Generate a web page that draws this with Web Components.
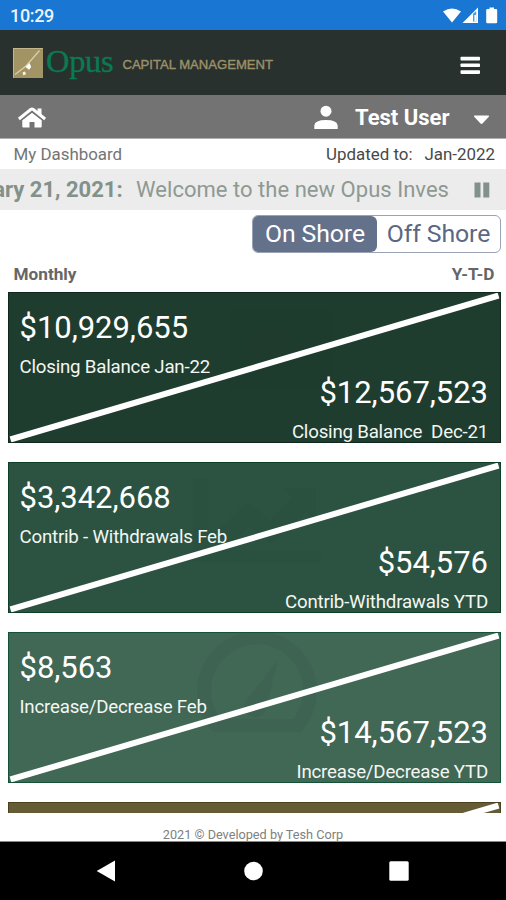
<!DOCTYPE html>
<html lang="en">
<head>
<meta charset="UTF-8" />
<title>Opus Capital Management</title>
<style>
  body { margin:0; background:#fff; font-family:Roboto, "Liberation Sans", sans-serif; }
</style>
</head>
<body>
<opus-app></opus-app>

<script>
/**
 * Android status bar with the clock and system icons.
 */
class StatusBar extends HTMLElement {
  constructor() {
    super();
    this.attachShadow({ mode: "open" });
  }

  connectedCallback() {
    this.shadowRoot.innerHTML = `
      <style>
        :host { display:flex; height:30px; box-sizing:border-box; padding:1px 7px 0 10px; align-items:center; justify-content:space-between; background:#1976d2; color:#eaf4ff; font-size:18px; font-weight:500; letter-spacing:-0.35px; }
        svg { display:block; }
      </style>
      <span><slot></slot></span>
      <svg width="57" height="18" viewBox="0 0 57 18" fill="#fff">
        <path d="M1 4.6Q10 -1.8 19 4.6L10 15.4Z" />
        <path d="M20.5 16L36 .5V16Z" />
        <path d="M31 6.8L34.2 4V14.6H31Z" fill="#1976d2" opacity=".75" />
        <path d="M32.4 8H34V14.6H32.4Z" />
        <path d="M47.5 .5h4.500V2h2q1.200 0 1.200 1.200V15q0 1.200-1.200 1.200h-8.600q-1.200 0-1.200-1.200V3.200Q44.200 2 45.400 2H47.500Z" />
      </svg>
    `;
  }
}

/**
 * Dark brand header with the logo and the menu button.
 */
class BrandHeader extends HTMLElement {
  constructor() {
    super();
    this.attachShadow({ mode: "open" });
  }

  connectedCallback() {
    this.shadowRoot.innerHTML = `
      <style>
        :host { display:flex; height:65px; box-sizing:border-box; padding:0 25px 0 13px; align-items:center; background:#29312e; }
        svg { display:block; }
        .name { margin:-4px 0 0 3px; color:#0b7a53; font:32.5px/40px "Liberation Serif", serif; letter-spacing:-0.3px; -webkit-text-stroke:0.3px #0b7a53; }
        .tagline { margin:4px 0 0 9px; color:#9c9068; font:13.1px/20px "Liberation Sans", sans-serif; -webkit-text-stroke:0.4px #9c9068; }
        .menu { margin:5px 0 0 auto; }
      </style>
      <svg width="30" height="30" viewBox="0 0 30 30">
        <rect width="30" height="30" fill="#a39466" />
        <path d="M0 .5H30M.5 0V30" stroke="#c3b88d" />
        <path d="M2 26.5L13 18L26.5 2.5" fill="none" stroke="#d9cfa6" stroke-width="1.3" />
        <path d="M16.5 15L18.2 19L16 21.8L12.5 19Z" fill="#fff" />
        <path d="M9.5 24.5L12 23.5L13 26L10.5 27.5Z" fill="#fff6d8" />
      </svg>
      <span class="name">Opus</span>
      <span class="tagline">CAPITAL MANAGEMENT</span>
      <svg class="menu" width="21" height="19" viewBox="0 0 21 19" fill="#fff">
        <rect x=".5" y=".8" width="19.5" height="3.7" rx=".8" />
        <rect x=".5" y="7.4" width="19.5" height="3.7" rx=".8" />
        <rect x=".5" y="14.2" width="19.5" height="3.7" rx=".8" />
      </svg>
    `;
  }
}

/**
 * Grey bar with the home link and the signed-in user.
 */
class UserBar extends HTMLElement {
  constructor() {
    super();
    this.attachShadow({ mode: "open" });
  }

  connectedCallback() {
    this.shadowRoot.innerHTML = `
      <style>
        :host { display:flex; height:44px; box-sizing:border-box; padding:1px 16px 0 17px; align-items:center; background:#737373; border-bottom:1px solid #b0b0b0; color:#fff; font-size:22px; font-weight:700; }
        svg { display:block; }
        .person { margin-left:auto; }
        .user { margin:1px 23.5px 0 17px; }
        .caret { margin-top:5px; }
      </style>
      <svg width="30" height="24" viewBox="0 0 30 24" fill="#fff">
        <path d="M5.3 15.2L15 7.8L24.7 15.2V21.5q0 1-1 1H17.5V17h-5V22.5H6.3q-1 0-1-1Z" />
        <path d="M20.5 3.5h4V10l-4-3Z" />
        <path d="M1.9 14L14 4.3q1-.7 2 0L28.100 14" fill="none" stroke="#fff" stroke-width="3" />
        <path d="M4.8 14.9L15 6.7L25.2 14.9" fill="none" stroke="#737373" />
      </svg>
      <svg class="person" width="24" height="25" viewBox="0 0 24 25" fill="#fff">
        <circle cx="12" cy="6.200" r="5.500" />
        <path d="M.3 24V20.5Q.8 15 12 15T23.7 20.5V24Z" />
      </svg>
      <span class="user"><slot></slot></span>
      <svg class="caret" width="17" height="10" viewBox="0 0 17 10" fill="#fff">
        <path d="M1.5 .5h14q1 .3.3 1.3L9.5 8.5q-1 .8-2 0L1.2 1.8Q.5.8 1.5.5Z" />
      </svg>
    `;
  }
}

/**
 * Announcement ticker with a pause button.
 */
class NewsTicker extends HTMLElement {
  constructor() {
    super();
    this.attachShadow({ mode: "open" });
  }

  connectedCallback() {
    this.shadowRoot.innerHTML = `
      <style>
        :host { display:flex; height:41px; align-items:center; padding-right:16px; background:#ebeceb; color:#8e9993; font-size:22px; }
        .window { display:flex; justify-content:flex-end; width:449px; overflow:hidden; white-space:pre; }
        .date { margin-right:13.5px; color:#82918a; font-weight:700; }
        .text { letter-spacing:0.03px; }
        .pause { display:block; margin-left:auto; }
      </style>
      <div class="window">
        <span class="date"><slot name="date"></slot></span>
        <span class="text"><slot></slot></span>
      </div>
      <svg class="pause" width="16" height="16" viewBox="0 0 16 16" fill="#82918a">
        <rect x=".5" y=".5" width="6" height="15" />
        <rect x="9.3" y=".5" width="6" height="15" />
      </svg>
    `;
  }
}

/**
 * Two-way switch between the on shore and off shore funds.
 */
class ShoreToggle extends HTMLElement {
  constructor() {
    super();
    this.attachShadow({ mode: "open" });
  }

  connectedCallback() {
    this.shadowRoot.innerHTML = `
      <style>
        :host { display:flex; width:249px; height:38px; box-sizing:border-box; border:1px solid #9aa3b3; border-radius:6px; background:#fff; font-size:24.8px; line-height:36px; letter-spacing:-0.1px; overflow:hidden; }
        span { flex:1; text-align:center; color:#5b6884; white-space:nowrap; }
        .on { flex:none; width:124px; background:#64718b; color:#fff; border-radius:0 6px 6px 0; }
      </style>
      <span class="on">On Shore</span>
      <span class="off">Off Shore</span>
    `;
  }
}

/**
 * Balance card split by a diagonal: monthly figure above, year-to-date below.
 * Attributes: color, edge, icon, monthly, monthly-label, ytd, ytd-label.
 */
class BalanceCard extends HTMLElement {
  constructor() {
    super();
    this.attachShadow({ mode: "open" });
  }

  /**
   * Faint picture behind the figures.
   * @returns {string}
   */
  watermark() {
    const icons = {
      money: `<path d="M222 18H324V98H222Z" opacity=".4" /><circle cx="262" cy="54" r="20" opacity=".4" />`,
      chart: `<path d="M185 16h16v72h112v13H185ZM208 70l32-30 22 18 22-22-10-10h34v34l-10-10-34 32-22-18-20 20Z" opacity=".7" />`,
      gauge: `<path fill-rule="evenodd" d="M205 100A60 60 0 1 1 293 100ZM213 87H285A46 46 0 1 0 213 87ZM240 66L270 28L258 76A11 11 0 1 1 240 66Z" />`
    };
    return icons[this.getAttribute("icon")] || "";
  }

  /**
   * One figure with its caption.
   * @param {string} name attribute holding the amount
   * @returns {string}
   */
  figure(name) {
    const amount = this.getAttribute(name);
    if (!amount) return "";
    return `
      <div class="${name}">
        <div class="amount">${amount}</div>
        <div class="label">${this.getAttribute(name + "-label")}</div>
      </div>
    `;
  }

  connectedCallback() {
    this.shadowRoot.innerHTML = `
      <style>
        :host { display:grid; flex:none; height:150.5px; box-sizing:border-box; border:1px solid ${this.getAttribute("edge")}; background:${this.getAttribute("color")}; color:#fff; overflow:hidden; }
        svg, .figures { grid-area:1 / 1; }
        svg { display:block; margin:-1px; }
        .figures { display:flex; flex-direction:column; padding:16px 12px 0 11px; }
        .amount { font-size:31px; line-height:38px; letter-spacing:-0.04px; }
        .label { margin-top:8px; font-size:18.7px; line-height:24px; letter-spacing:-0.21px; color:#f3f6f3; white-space:pre; }
        .ytd { align-self:flex-end; text-align:right; margin-top:-5px; }
      </style>
      <svg width="493.5" height="150.5" viewBox="0 0 493.5 150.5">
        <g fill="#000" opacity=".035">${this.watermark()}</g>
        <path d="M2.5 147.5L490.5 3.5" stroke="#fff" stroke-width="6" />
      </svg>
      <div class="figures">
        ${this.figure("monthly")}
        ${this.figure("ytd")}
      </div>
    `;
  }
}

/**
 * Android navigation bar.
 */
class NavBar extends HTMLElement {
  constructor() {
    super();
    this.attachShadow({ mode: "open" });
  }

  connectedCallback() {
    this.shadowRoot.innerHTML = `
      <style>
        :host { display:flex; height:58px; box-sizing:border-box; padding:0 97px 0 96px; align-items:center; justify-content:space-between; background:#000; }
        svg { display:block; }
      </style>
      <svg width="20" height="22" viewBox="0 0 20 22" fill="#fff"><path d="M.7 11L19 .5V21.5Z" /></svg>
      <svg width="20" height="20" viewBox="0 0 20 20" fill="#fff"><circle cx="10.5" cy="10" r="9.3" /></svg>
      <svg width="20" height="20" viewBox="0 0 20 20" fill="#fff"><rect x=".3" y=".3" width="19.4" height="19.4" rx="1.5" /></svg>
    `;
  }
}

/**
 * Dashboard page.
 */
class OpusApp extends HTMLElement {
  constructor() {
    super();
    this.attachShadow({ mode: "open" });
  }

  connectedCallback() {
    this.shadowRoot.innerHTML = `
      <style>
        :host { display:flex; flex-direction:column; height:900px; width:506px; overflow:hidden; }
        .crumbs { display:flex; height:30px; padding:0 11px 0 13.5px; box-sizing:border-box; align-items:center; font-size:16.9px; color:#484848; }
        .page { margin-right:auto; color:#747474; }
        .updated { margin-right:12px; }
        .switch { display:flex; justify-content:flex-end; padding:5px 5px 0 0; }
        .columns { display:flex; justify-content:space-between; height:39px; box-sizing:border-box; padding:10px 11.5px 0 13.5px; font-size:17.2px; line-height:22px; font-weight:700; color:#666; }
        .cards { display:flex; flex-direction:column; gap:19.5px; height:520.5px; padding:0 5px 0 7.5px; overflow:hidden; }
        footer { flex:1; padding-top:13px; box-sizing:border-box; border-bottom:1px solid #888; text-align:center; font-size:12.7px; line-height:17px; color:#808080; overflow:hidden; }
      </style>
      <status-bar>10:29</status-bar>
      <brand-header></brand-header>
      <user-bar>Test User</user-bar>
      <div class="crumbs">
        <span class="page">My Dashboard</span>
        <span class="updated">Updated to:</span>
        <span class="month">Jan-2022</span>
      </div>
      <news-ticker><span slot="date">ary 21, 2021:</span>Welcome to the new Opus Inves</news-ticker>
      <div class="switch"><shore-toggle></shore-toggle></div>
      <div class="columns"><span>Monthly</span><span>Y-T-D</span></div>
      <div class="cards">
        <balance-card color="#1f3d2f" edge="#10271c" icon="money" monthly="$10,929,655" monthly-label="Closing Balance Jan-22" ytd="$12,567,523" ytd-label="Closing Balance  Dec-21"></balance-card>
        <balance-card color="#2c5341" edge="#0e3f26" icon="chart" monthly="$3,342,668" monthly-label="Contrib - Withdrawals Feb" ytd="$54,576" ytd-label="Contrib-Withdrawals YTD"></balance-card>
        <balance-card color="#416755" edge="#145238" icon="gauge" monthly="$8,563" monthly-label="Increase/Decrease Feb" ytd="$14,567,523" ytd-label="Increase/Decrease YTD"></balance-card>
        <balance-card color="#655b34" edge="#4a4120"></balance-card>
      </div>
      <footer>2021 © Developed by Tesh Corp</footer>
      <nav-bar></nav-bar>
    `;
  }
}

customElements.define("status-bar", StatusBar);
customElements.define("brand-header", BrandHeader);
customElements.define("user-bar", UserBar);
customElements.define("news-ticker", NewsTicker);
customElements.define("shore-toggle", ShoreToggle);
customElements.define("balance-card", BalanceCard);
customElements.define("nav-bar", NavBar);
customElements.define("opus-app", OpusApp);
</script>
</body>
</html>
